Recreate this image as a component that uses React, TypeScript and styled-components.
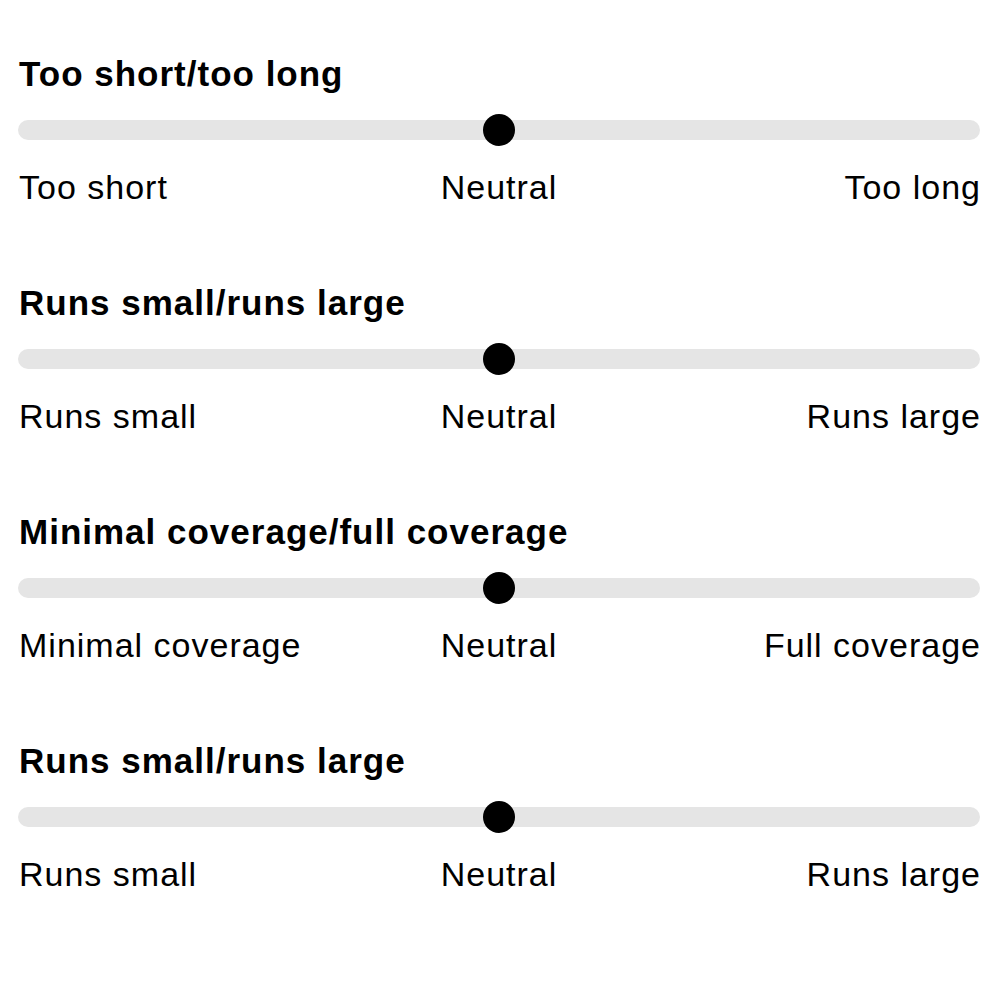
import styled, { createGlobalStyle } from 'styled-components'

const GlobalStyle = createGlobalStyle`
  html, body {
    margin: 0;
    padding: 0;
    background: #fff;
  }
  body {
    font-family: "Liberation Sans", Arial, sans-serif;
    color: #000;
  }
`

const Page = styled.div`
  padding: 54px 20px 0 18px;
  display: flex;
  flex-direction: column;
  gap: 76px;
`

const Section = styled.section`
  display: flex;
  flex-direction: column;
`

const Title = styled.h2`
  margin: 0 0 26px 1px;
  font-size: 35px;
  line-height: 40px;
  font-weight: 700;
  letter-spacing: 1px;
`

const Track = styled.div`
  position: relative;
  height: 20px;
  border-radius: 10px;
  background: #e5e5e5;
`

const Thumb = styled.div<{ $pos: number }>`
  position: absolute;
  top: 50%;
  left: ${p => p.$pos}%;
  width: 32px;
  height: 32px;
  border-radius: 50%;
  background: #000;
  transform: translate(-50%, -50%);
`

const Labels = styled.div`
  margin-top: 27px;
  display: grid;
  grid-template-columns: 1fr auto 1fr;
  font-size: 34px;
  line-height: 40px;
  letter-spacing: 1px;
`

const Label = styled.span<{ $align: 'left' | 'center' | 'right' }>`
  text-align: ${p => p.$align};
  padding-left: ${p => (p.$align === 'left' ? '1px' : '0')};
  margin-right: ${p => (p.$align === 'right' ? '-1px' : '0')};
`

type Scale = { title: string; low: string; high: string }

const scales: Scale[] = [
  { title: 'Too short/too long', low: 'Too short', high: 'Too long' },
  { title: 'Runs small/runs large', low: 'Runs small', high: 'Runs large' },
  { title: 'Minimal coverage/full coverage', low: 'Minimal coverage', high: 'Full coverage' },
  { title: 'Runs small/runs large', low: 'Runs small', high: 'Runs large' },
]

function App() {
  return (
    <>
      <GlobalStyle />
      <Page>
        {scales.map((s, i) => (
          <Section key={i}>
            <Title>{s.title}</Title>
            <Track>
              <Thumb $pos={50} />
            </Track>
            <Labels>
              <Label $align="left">{s.low}</Label>
              <Label $align="center">Neutral</Label>
              <Label $align="right">{s.high}</Label>
            </Labels>
          </Section>
        ))}
      </Page>
    </>
  )
}

export default App
